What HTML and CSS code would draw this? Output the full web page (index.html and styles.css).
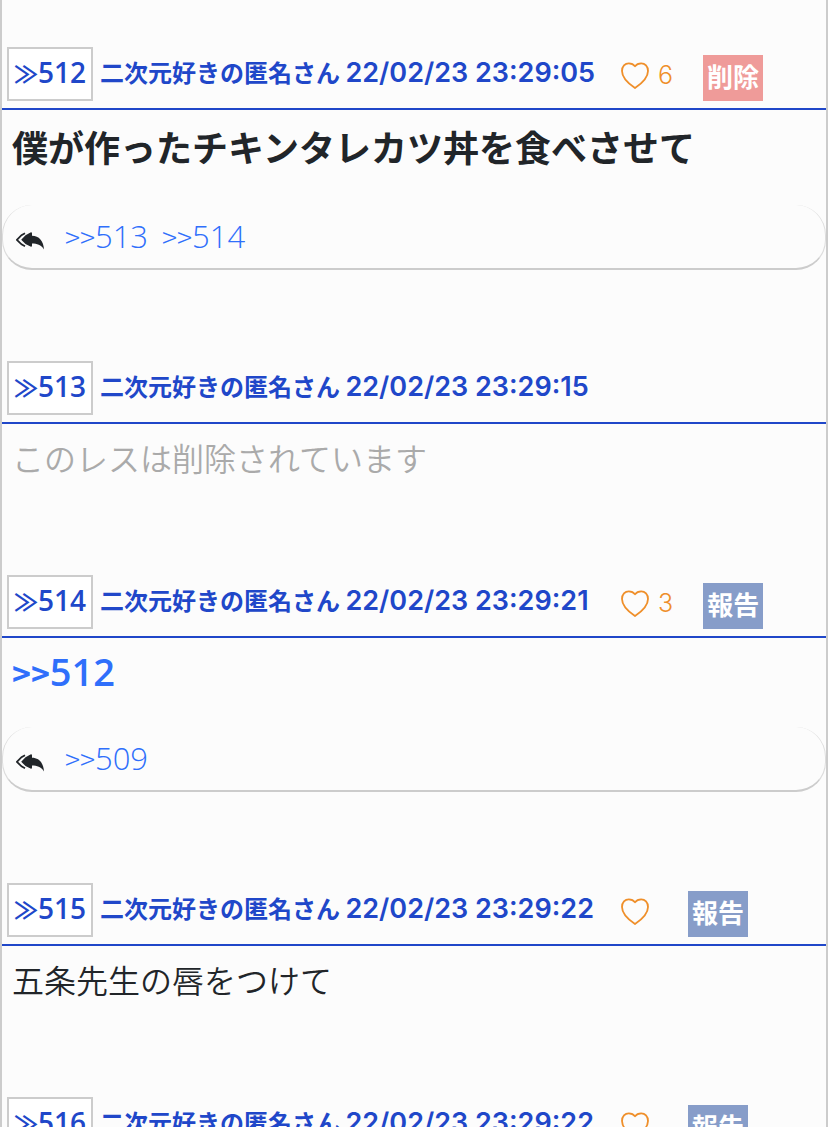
FILE: index.html
```html
<!DOCTYPE html>
<html lang="ja">
	<head>
		<meta charset="UTF-8">
		<meta name="viewport" content="width=device-width, initial-scale=1">
		<title>スレッド</title>
		<link rel="stylesheet" href="styles.css">
	</head>
	<body>
		<!-- 共通アイコン -->
		<svg class="sprite" aria-hidden="true">
			<symbol id="heart" viewBox="0 0 28 27">
				<path d="M14 26C9.500 23 1 16.500 1 9C1 4.300 4 1.300 7.800 1.300C10.600 1.300 12.600 2.300 14 4.300C15.400 2.300 17.400 1.300 20.200 1.300C24 1.300 27 4.300 27 9C27 16.500 18.500 23 14 26Z" fill="none" stroke="currentColor" stroke-width="1.800" stroke-linejoin="round"/>
			</symbol>
			<symbol id="reply" viewBox="0 0 28 18">
				<path d="M9 1.300L5.500 3.200L.9 7.800L5.500 12.300L9 14.200" fill="none" stroke="currentColor" stroke-width="1.800"/>
				<path d="M5.200 7.800L9.500 3.200L14.500.4Q16 0 16 1.500V3.800C23 3.800 27.600 9 28 17.500C25 13 21 11.600 16 11.600V13.500Q16 15 14.500 14.600L9.500 12Z" fill="currentColor"/>
			</symbol>
		</svg>

		<main class="thread">
			<article class="post">
				<header class="post-header">
					<a href="#" class="number">≫<span class="num">512</span></a>
					<div class="name">二次元好きの匿名さん <time>22/02/23 23:29:05</time></div>
					<button type="button" class="like" aria-label="いいね"><svg class="heart"><use href="#heart"/></svg><span class="count">6</span></button>
					<button type="button" class="button delete">削除</button>
				</header>
				<p class="text strong">僕が作ったチキンタレカツ丼を食べさせて</p>
				<div class="replies">
					<svg class="reply"><use href="#reply"/></svg>
					<a href="#"><span class="gt">&gt;&gt;</span>513</a>
					<a href="#"><span class="gt">&gt;&gt;</span>514</a>
				</div>
			</article>

			<article class="post">
				<header class="post-header">
					<a href="#" class="number">≫<span class="num">513</span></a>
					<div class="name">二次元好きの匿名さん <time>22/02/23 23:29:15</time></div>
				</header>
				<p class="text deleted">このレスは削除されています</p>
			</article>

			<article class="post">
				<header class="post-header">
					<a href="#" class="number">≫<span class="num">514</span></a>
					<div class="name">二次元好きの匿名さん <time>22/02/23 23:29:21</time></div>
					<button type="button" class="like" aria-label="いいね"><svg class="heart"><use href="#heart"/></svg><span class="count">3</span></button>
					<button type="button" class="button">報告</button>
				</header>
				<p class="text"><a href="#" class="anchor"><span class="gt">&gt;&gt;</span>512</a></p>
				<div class="replies">
					<svg class="reply"><use href="#reply"/></svg>
					<a href="#"><span class="gt">&gt;&gt;</span>509</a>
				</div>
			</article>

			<article class="post">
				<header class="post-header">
					<a href="#" class="number">≫<span class="num">515</span></a>
					<div class="name">二次元好きの匿名さん <time>22/02/23 23:29:22</time></div>
					<button type="button" class="like" aria-label="いいね"><svg class="heart"><use href="#heart"/></svg><span class="count"></span></button>
					<button type="button" class="button">報告</button>
				</header>
				<p class="text">五条先生の唇をつけて</p>
			</article>

			<article class="post">
				<header class="post-header">
					<a href="#" class="number">≫<span class="num">516</span></a>
					<div class="name">二次元好きの匿名さん <time>22/02/23 23:29:22</time></div>
					<button type="button" class="like" aria-label="いいね"><svg class="heart"><use href="#heart"/></svg><span class="count"></span></button>
					<button type="button" class="button">報告</button>
				</header>
			</article>
		</main>
	</body>
</html>
```

FILE: styles.css
```css
html {
	box-sizing: border-box;
	font-family: "Noto Sans CJK JP", sans-serif;
	color: #212529;
	background: #fcfcfc;
}
*, *:before, *:after {
	box-sizing: inherit;
}

body {
	margin: 0;
}

a {
	color: #2f6ffb;
	text-decoration: none;
}

button {
	margin: 0;
	padding: 0;
	border: 0;
	font-family: inherit;
	background: none;
	cursor: pointer;
}

.sprite {
	display: none;
}

.thread {
	min-height: 100vh;
	padding-top: 47px;
	border: solid #ccc;
	border-width: 0 2px;
}

.post {
	padding-bottom: 63px;
}

/* 投稿ヘッダー */
.post-header {
	display: flex;
	align-items: flex-end;
	padding: 0 5px 7px;
	border-bottom: 2px solid #2047c9;
	white-space: nowrap;
}

.number {
	width: 86px;
	height: 54px;
	padding-left: 5px;
	border: 2px solid #ccc;
	font-size: 24px;
	font-weight: 700;
	line-height: 46px;
	color: #2047c9;
	background: #fff;
}

.num {
	font-family: "Open Sans", sans-serif;
	font-size: 28px;
	font-weight: 600;
}

.name {
	width: 528px;
	height: 54px;
	padding-left: 7px;
	font-size: 24px;
	font-weight: 600;
	line-height: 50px;
	color: #2047c9;
}

.name time {
	font-family: Inter, sans-serif;
	font-size: 27px;
}

.like {
	display: flex;
	align-items: center;
	height: 52px;
	color: #ef8f2a;
}

.heart {
	width: 28px;
	height: 27px;
}

.count {
	margin: 0 30px 0 9px;
	font-family: Inter, sans-serif;
	font-size: 25px;
	font-weight: 300;
}

.button {
	height: 46px;
	padding: 0 4px 4px;
	font-size: 26px;
	font-weight: 600;
	line-height: 42px;
	color: #fff;
	background: #879dc9;
}

.delete {
	background: #ef9b99;
}

/* 本文 */
.text {
	margin: 0;
	padding: 9px 10px 31px;
	font-size: 32px;
	font-weight: 350;
	line-height: 48px;
}

.strong {
	font-size: 36px;
	font-weight: 600;
	line-height: 55px;
}

.deleted {
	color: #aaa;
}

.anchor {
	font-family: "Open Sans", sans-serif;
	font-size: 38px;
	font-weight: 600;
}

.gt {
	font-family: "Noto Sans CJK JP", sans-serif;
	font-size: 28px;
}

.anchor .gt {
	font-size: 32px;
}

/* 返信一覧 */
.replies {
	display: flex;
	align-items: center;
	gap: 14px;
	height: 65px;
	margin-bottom: 28px;
	padding: 0 0 2px 13px;
	border: 1px solid #ddd;
	border-top: 0;
	border-bottom: 2px solid #ccc;
	border-radius: 30px;
	font-family: "Open Sans", sans-serif;
	font-size: 31px;
	font-weight: 300;
}

.reply {
	width: 28px;
	height: 18px;
	margin: 10px 7px 0 0;
}
```
